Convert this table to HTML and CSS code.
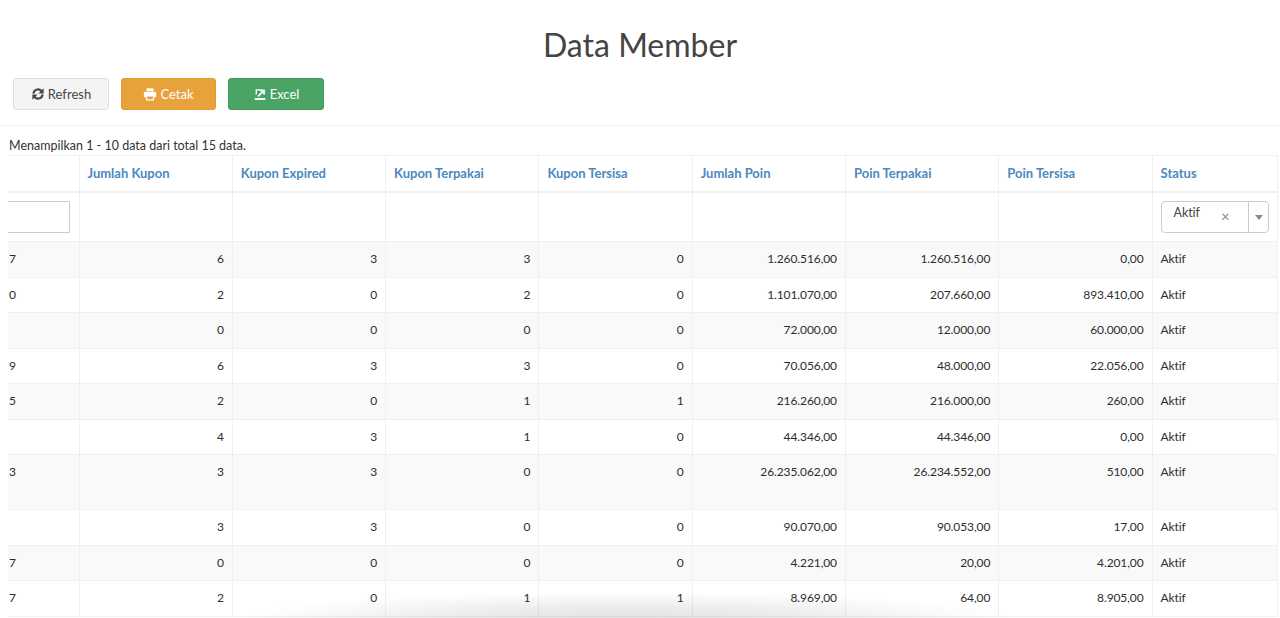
FILE: index.html
```html
<!DOCTYPE html>
<html lang="id">
<head>
<meta charset="utf-8">
<title>Data Member</title>
<link rel="stylesheet" href="styles.css">
</head>
<body>
<h1 class="title">Data Member</h1>
<div class="toolbar">
  <button class="btn btn-default">
    <svg class="ico" viewBox="0 0 16 16"><path d="M2.8 7.6A5.2 5.2 0 0 1 11.9 4.5" fill="none" stroke="currentColor" stroke-width="2.4"/><path d="M14.4 1.4V7.4H8.4z" fill="currentColor"/><path d="M13.2 8.4A5.2 5.2 0 0 1 4.1 11.5" fill="none" stroke="currentColor" stroke-width="2.4"/><path d="M1.6 14.6V8.6h6z" fill="currentColor"/></svg>Refresh
  </button>
  <button class="btn btn-warning">
    <svg class="ico" viewBox="0 0 16 16"><rect x="4" y="1.5" width="8" height="3.2" fill="currentColor"/><rect x="1" y="5.3" width="14" height="6.4" rx="1.4" fill="currentColor"/><rect x="4" y="10.2" width="8" height="4.6" fill="#e8a23c" stroke="currentColor" stroke-width="1.4"/></svg>Cetak
  </button>
  <button class="btn btn-success">
    <svg class="ico" viewBox="0 0 16 16"><path d="M3 2.5h5l1.6 1.6H4.6v3.6L3 9.3z" fill="currentColor"/><path d="M5 10l5.2-5.2H7.8V2.8h5.8v5.8h-2V6.2l-5.2 5.2z" fill="currentColor"/><rect x="2" y="12.6" width="12" height="2.2" fill="currentColor"/></svg>Excel
  </button>
</div>
<hr class="divider">
<div class="info">Menampilkan 1 - 10 data dari total 15 data.</div>
<div class="table-wrap">
<table class="grid">
  <colgroup>
    <col class="c-cut"><col class="c-num"><col class="c-num"><col class="c-num"><col class="c-num"><col class="c-num"><col class="c-num"><col class="c-num"><col class="c-status">
  </colgroup>
  <thead>
    <tr class="head">
      <th class="cut"></th>
      <th>Jumlah Kupon</th>
      <th>Kupon Expired</th>
      <th>Kupon Terpakai</th>
      <th>Kupon Tersisa</th>
      <th>Jumlah Poin</th>
      <th>Poin Terpakai</th>
      <th>Poin Tersisa</th>
      <th>Status</th>
    </tr>
    <tr class="filter">
      <td class="cut"><input class="cut-input" type="text"></td>
      <td></td><td></td><td></td><td></td><td></td><td></td><td></td>
      <td>
        <div class="select">
          <span class="sel-val">Aktif</span>
          <span class="sel-clear">×</span>
          <span class="sel-arrow"></span>
        </div>
      </td>
    </tr>
  </thead>
  <tbody>
    <tr><td class="cut">7</td><td>6</td><td>3</td><td>3</td><td>0</td><td>1.260.516,00</td><td>1.260.516,00</td><td>0,00</td><td class="st">Aktif</td></tr>
    <tr><td class="cut">0</td><td>2</td><td>0</td><td>2</td><td>0</td><td>1.101.070,00</td><td>207.660,00</td><td>893.410,00</td><td class="st">Aktif</td></tr>
    <tr><td class="cut"></td><td>0</td><td>0</td><td>0</td><td>0</td><td>72.000,00</td><td>12.000,00</td><td>60.000,00</td><td class="st">Aktif</td></tr>
    <tr><td class="cut">9</td><td>6</td><td>3</td><td>3</td><td>0</td><td>70.056,00</td><td>48.000,00</td><td>22.056,00</td><td class="st">Aktif</td></tr>
    <tr><td class="cut">5</td><td>2</td><td>0</td><td>1</td><td>1</td><td>216.260,00</td><td>216.000,00</td><td>260,00</td><td class="st">Aktif</td></tr>
    <tr><td class="cut"></td><td>4</td><td>3</td><td>1</td><td>0</td><td>44.346,00</td><td>44.346,00</td><td>0,00</td><td class="st">Aktif</td></tr>
    <tr class="tall"><td class="cut">3</td><td>3</td><td>3</td><td>0</td><td>0</td><td>26.235.062,00</td><td>26.234.552,00</td><td>510,00</td><td class="st">Aktif</td></tr>
    <tr><td class="cut"></td><td>3</td><td>3</td><td>0</td><td>0</td><td>90.070,00</td><td>90.053,00</td><td>17,00</td><td class="st">Aktif</td></tr>
    <tr><td class="cut">7</td><td>0</td><td>0</td><td>0</td><td>0</td><td>4.221,00</td><td>20,00</td><td>4.201,00</td><td class="st">Aktif</td></tr>
    <tr><td class="cut">7</td><td>2</td><td>0</td><td>1</td><td>1</td><td>8.969,00</td><td>64,00</td><td>8.905,00</td><td class="st">Aktif</td></tr>
  </tbody>
</table>
</div>
<div class="shadow"></div>
</body>
</html>
```
FILE: styles.css
```css
* { box-sizing: border-box; }
html, body {
  margin: 0;
  padding: 0;
  background: #fff;
  overflow: hidden;
}
body {
  font-family: "Lato", "Liberation Sans", sans-serif;
  font-size: 13px;
  color: #333;
  width: 1280px;
  height: 618px;
  position: relative;
}
.title {
  margin: 0;
  padding-top: 25px;
  text-align: center;
  font-weight: 400;
  font-size: 32px;
  line-height: 40px;
  color: #444;
  height: 78px;
}
.toolbar {
  display: flex;
  gap: 12px;
  padding-left: 13px;
  height: 32px;
}
.btn {
  display: inline-flex;
  align-items: center;
  justify-content: center;
  gap: 3px;
  width: 96px;
  height: 32px;
  border-radius: 3px;
  font-family: inherit;
  font-size: 13px;
  padding: 0;
  cursor: pointer;
}
.btn-default { background: #f4f4f4; border: 1px solid #ddd; color: #444; }
.btn-warning { background: #e8a23c; border: 1px solid #e29a32; color: #fff; width: 95px; }
.btn-success { background: #4aa564; border: 1px solid #43995b; color: #fff; }
.ico { width: 14px; height: 14px; }
.divider {
  margin: 15px 0 0;
  border: 0;
  border-top: 1px solid #f0f0f0;
  height: 0;
}
.info {
  padding: 11px 0 0 9px;
  font-size: 12.5px;
  line-height: 18px;
  height: 29px;
}
.table-wrap {
  margin-left: 8px;
  width: 1270px;
  overflow: hidden;
}
.grid {
  border-collapse: collapse;
  table-layout: fixed;
  width: 1269px;
}
.c-cut { width: 71px; }
.c-num { width: 153.3px; }
.c-status { width: 125px; }
.grid th, .grid td {
  border: 1px solid #f0f0f0;
  padding: 8px 8px;
  line-height: 18.5px;
  vertical-align: top;
  white-space: nowrap;
  overflow: hidden;
}
.grid td {
  font-size: 12px;
  letter-spacing: -0.1px;
  color: #2d2d2d;
}
.grid th.cut, .grid td.cut { border-left: 0; padding-left: 1px; }
.grid th {
  text-align: left;
  color: #4b89c0;
  font-weight: 700;
  font-size: 13px;
  padding-top: 8px;
  padding-bottom: 8px;
  height: 36px;
  border-bottom: 2px solid #f0f0f0;
}
.grid tbody td { text-align: right; }
.grid tbody td.cut { text-align: left; }
.grid tbody td.st { text-align: left; }
.grid tbody tr:nth-child(odd) td { background: #f9f9f9; }
.grid tr.tall td { height: 55px; }
.filter td { height: 50px; padding: 8px; }
.filter td.cut { padding: 8px 8px 8px 0; }
.cut-input {
  display: block;
  width: 72px;
  height: 32px;
  margin-left: -10px;
  border: 1px solid #ccc;
  background: #fff;
}
.select {
  display: flex;
  align-items: center;
  height: 32px;
  width: 108px;
  border: 1px solid #ccc;
  border-radius: 4px;
  background: #fff;
  color: #444;
  font-size: 12.5px;
}
.sel-val { padding: 0 0 6px 12px; flex: 1; }
.sel-clear { color: #888; font-size: 15px; padding-right: 18px; }
.sel-arrow {
  width: 20px;
  height: 30px;
  border-left: 1px solid #ccc;
  position: relative;
}
.sel-arrow::after {
  content: "";
  position: absolute;
  left: 6px;
  top: 13px;
  border-left: 4px solid transparent;
  border-right: 4px solid transparent;
  border-top: 5px solid #888;
}
.shadow {
  position: absolute;
  left: 240px;
  top: 592px;
  width: 770px;
  height: 26px;
  background: radial-gradient(ellipse 50% 100% at 50% 100%, rgba(0,0,0,0.11) 0%, rgba(0,0,0,0.07) 45%, rgba(0,0,0,0) 100%);
  pointer-events: none;
}
```
